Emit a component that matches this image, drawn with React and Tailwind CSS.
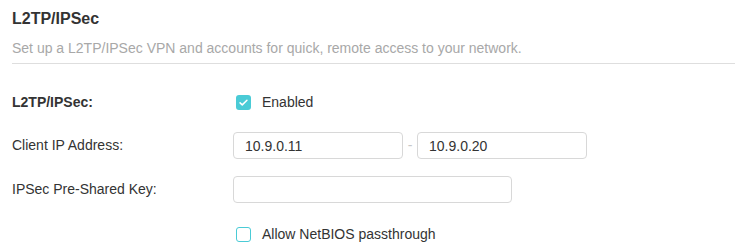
import React from 'react';

const CheckIcon = () => (
  <svg viewBox="0 0 16 16" className="w-[11px] h-[11px]" fill="none">
    <path d="M3 8.5l3.2 3L13 4.8" stroke="#fff" strokeWidth="2.2" strokeLinecap="round" strokeLinejoin="round" />
  </svg>
);

const Checkbox = ({ checked, label }) => (
  <label className="flex items-center ml-[3px]">
    <span
      className={`w-[15px] h-[15px] rounded-[3px] flex items-center justify-center ${
        checked ? 'bg-[#4acbd6]' : 'bg-white border border-[#4acbd6]'
      }`}
    >
      {checked && <CheckIcon />}
    </span>
    <span className="ml-[11px] text-[14px] text-[#333]">{label}</span>
  </label>
);

const TextInput = ({ value, width }) => (
  <input
    readOnly
    value={value}
    className={`h-[27px] ${width} border border-[#d8d8d8] rounded-[4px] px-[11px] text-[14px] text-[#333] bg-white outline-none`}
  />
);

const Row = ({ label, bold, children, className = '' }) => (
  <div className={`flex items-center h-[27px] ${className}`}>
    <div className={`w-[221px] text-[14px] text-[#333] ${bold ? 'font-bold' : ''}`}>{label}</div>
    <div className="flex items-center">{children}</div>
  </div>
);

export default function App() {
  return (
    <div className="w-[741px] h-[250px] bg-white pl-[12px] pr-[6px] pt-[9px] font-['Liberation_Sans',Arial,sans-serif]">
      {/* Header */}
      <h2 className="text-[16px] leading-[20px] font-bold text-[#333]">L2TP/IPSec</h2>
      <p className="mt-[10px] text-[14px] leading-[18px] text-[#a8a8a8]">
        Set up a L2TP/IPSec VPN and accounts for quick, remote access to your network.
      </p>
      <div className="mt-[6px] border-t border-[#dedede]" />

      {/* Form */}
      <Row label="L2TP/IPSec:" bold className="mt-[25px]">
        <Checkbox checked label="Enabled" />
      </Row>

      <Row label="Client IP Address:" className="mt-[16px]">
        <TextInput value="10.9.0.11" width="w-[170px]" />
        <span className="w-[14px] text-center text-[14px] text-[#c8c8c8]">-</span>
        <TextInput value="10.9.0.20" width="w-[170px]" />
      </Row>

      <Row label="IPSec Pre-Shared Key:" className="mt-[17px]">
        <TextInput value="" width="w-[279px]" />
      </Row>

      <Row label="" className="mt-[18px]">
        <Checkbox label="Allow NetBIOS passthrough" />
      </Row>
    </div>
  );
}
